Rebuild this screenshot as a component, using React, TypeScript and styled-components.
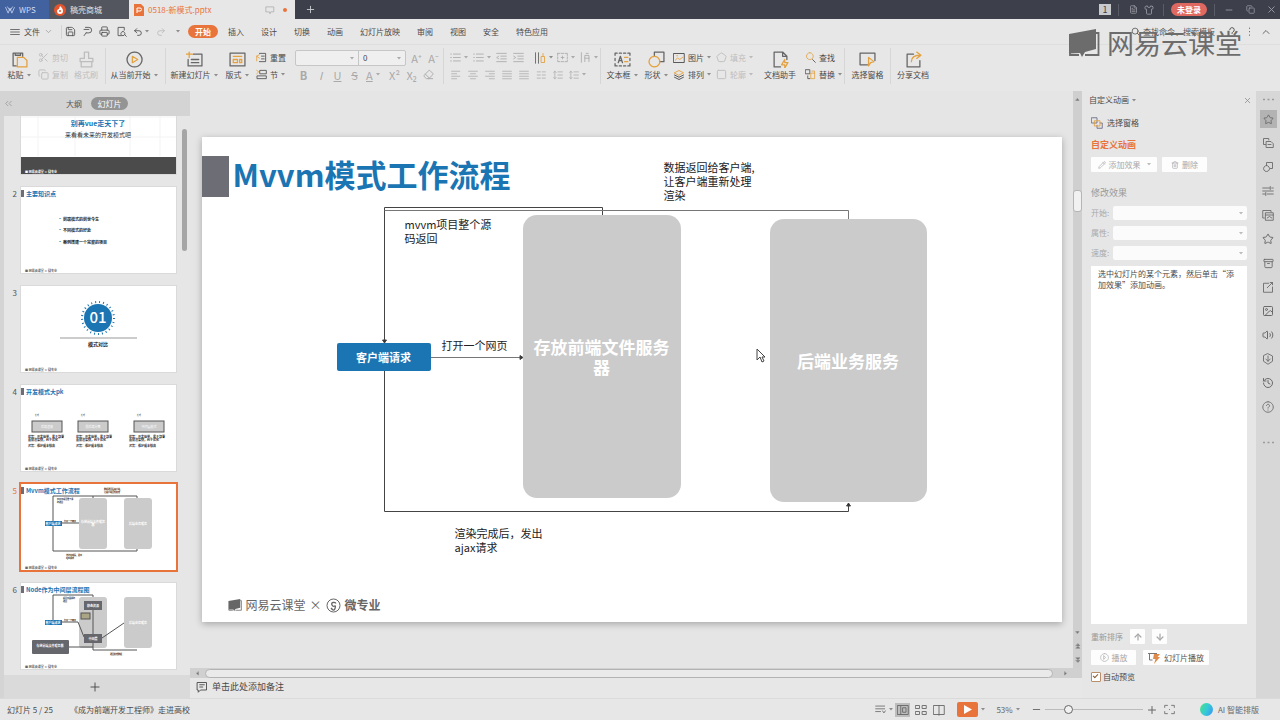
import React, { useLayoutEffect, useRef, useState } from "react";
import styled, { createGlobalStyle } from "styled-components";
import {
  Scissors, Copy, Undo2, Redo2, Search, X, Minus, Plus, Star, Image, Volume2, History,
  Archive, Save, Printer, ChevronUp, ChevronDown, Shirt, FileText, Pencil, Trash2,
  ArrowUp, ArrowDown, Eraser, Pentagon, Square,
} from "lucide-react";

const c = {
  dark: "#3d3f4b",
  chrome: "#e8e7e7",
  panel: "#e6e6e6",
  trough: "#d4d4d4",
  line: "#d6d6d6",
  text: "#4a4a4a",
  icon: "#666",
  muted: "#a9a9a9",
  orange: "#e8743b",
  blue: "#1b75b3",
  node: "#cbcbcb",
};

const Global = createGlobalStyle`
  *, *::before, *::after { box-sizing: border-box; }
  body { margin: 0; background: ${c.chrome}; }
  body, button, input, select {
    font-family: "Noto Sans CJK SC", "Noto Sans", sans-serif;
    font-size: 8px;
    line-height: 12px;
    color: ${c.text};
  }
  button { border: 0; padding: 0; background: none; white-space: nowrap; cursor: pointer; }
  svg { display: block; flex: none; }
`;

const Window = styled.div`
  position: relative;
  display: flex;
  flex-direction: column;
  height: 100vh;
  min-height: 480px;
  overflow: hidden;
  background: ${c.chrome};
`;

/* ---------- icons ---------- */

type GlyphProps = { d: string; accent?: string; size?: number; color?: string; fill?: string };

const Glyph = ({ d, accent, size = 12, color = "currentColor", fill = "none" }: GlyphProps) => (
  <svg width={size} height={size} viewBox="0 0 16 16" fill={fill} stroke={color} strokeWidth={1.2} strokeLinejoin="round" strokeLinecap="round" aria-hidden="true">
    <path d={d} />
    {accent && <path d={accent} fill="none" stroke="#e3a13f" />}
  </svg>
);

const Caret = ({ color = "#8c8c8c" }: { color?: string }) => (
  <svg width="4" height="3" viewBox="0 0 4 3" aria-hidden="true"><path d="M0 0h4L2 2.6z" fill={color} /></svg>
);

const BookLogo = ({ size = 32, color = "#6c6c6c" }: { size?: number; color?: string }) => (
  <svg width={size} height={size} viewBox="0 0 32 32" aria-hidden="true">
    <path d="M1 7 28 2v20L17 25l-3 5-2-4-11 .5z" fill={color} />
    <path d="M28 6h2.500v22H17M2 26v2h9" fill="none" stroke={color} strokeWidth="1.800" />
  </svg>
);

const g = {
  menu: "M1 4h14M1 8h14M1 12h14",
  preview: "M12 6V2H3v12h5M10 8a3 3 0 1 0 .1 0M12.500 12.500 15 15",
  bullets: "M1 3h1M5 3h10M1 8h1M5 8h10M1 13h1M5 13h10",
  left: "M1 2h13M1 6h8M1 10h13M1 14h8",
  center: "M1 2h14M4 6h8M1 10h14M4 14h8",
  right: "M1 2h14M7 6h8M1 10h14M7 14h8",
  justify: "M1 2h14M1 6h14M1 10h14M1 14h14",
  indent: "M1 2h14M7 6h8M7 10h8M1 14h14M4 6 1 8l3 2",
  outdent: "M1 2h14M7 6h8M7 10h8M1 14h14M1 6l3 2-3 2",
  spacing: "M3 2v12M1 4l2-2 2 2M1 12l2 2 2-2M8 3h7M8 8h7M8 13h7",
  columns: "M2 3h5M2 8h5M2 13h5M10 3h5M10 8h5M10 13h5",
  dir: "M2 1v14M6 1v14",
  frame: "M1 2h3M6 2h4M12 2h3v3M15 7v3M15 12v2h-3M10 14H6M4 14H1v-2M1 10V7M1 5V2M6 8h4M8 6v4",
  textDir: "M2 1v14M7 14V5h6v9M7 9h6M9 2h3",
  chevrons: "M7 4 3 8l4 4M13 4 9 8l4 4",
};

/* ---------- title bar ---------- */

const TitleBar = styled.header`
  display: flex;
  align-items: center;
  flex: none;
  height: 19px;
  background: ${c.dark};
  color: #d8d8dc;
`;

const WindowTab = styled.button<{ $w: number; $bg: string; $fg: string }>`
  display: flex;
  align-items: center;
  gap: 4px;
  align-self: stretch;
  width: ${(p) => p.$w}px;
  padding: 0 8px 0 5px;
  background: ${(p) => p.$bg};
  color: ${(p) => p.$fg};
`;

const Push = styled.span<{ $fixed?: boolean }>`
  flex: ${(p) => (p.$fixed ? "none" : 1)};
`;

const Dot = styled.span`
  width: 4px;
  height: 4px;
  border-radius: 50%;
  background: ${c.orange};
`;

const NewTab = styled.button`
  display: grid;
  place-items: center;
  width: 31px;
  color: #c9cad0;
`;

const TitleTools = styled.div`
  display: flex;
  align-items: center;
  gap: 7px;
  margin-left: auto;
  padding-right: 2px;
`;

const TitleButton = styled.button<{ $w?: number }>`
  display: grid;
  place-items: center;
  width: ${(p) => p.$w ?? 14}px;
  height: 14px;
  color: #9c9da6;
`;

const TitlePair = styled.div`
  display: flex;
  gap: 2px;
`;

const CountBadge = styled.span`
  width: 12px;
  height: 11px;
  background: #c9cacd;
  color: ${c.dark};
  font-size: 9px;
  line-height: 11px;
  text-align: center;
`;

const Login = styled.button`
  width: 36px;
  height: 13px;
  border-radius: 7px;
  background: #df6860;
  color: #fff;
  font-weight: 700;
`;

const Rule = styled.span`
  width: 1px;
  height: 12px;
  background: #5a5c67;
`;

/* ---------- menu row ---------- */

const MenuRow = styled.div`
  display: flex;
  align-items: center;
  flex: none;
  height: 25px;
  padding: 0 9px 0 10px;
`;

const FileButton = styled.button`
  display: flex;
  align-items: center;
  gap: 4px;
  width: 42px;
`;

const QuickBar = styled.div`
  display: flex;
  align-items: center;
  gap: 1px;
  width: 127px;
  margin-left: 9px;
  border-left: 1px solid #d3d3d3;
`;

const QuickButton = styled.button<{ $w?: number }>`
  display: flex;
  align-items: center;
  justify-content: center;
  gap: 2px;
  width: ${(p) => p.$w ?? 16}px;
  height: 14px;
`;

const Tabs = styled.nav`
  display: flex;
  align-items: center;
  gap: 17px;
`;

const TabButton = styled.button<{ $active?: boolean }>`
  ${(p) => p.$active && `
    width: 30px;
    height: 13px;
    margin-right: -7px;
    border-radius: 7px;
    background: ${c.orange};
    color: #fff;
    font-weight: 700;
  `}
`;

const MenuRight = styled.div`
  display: flex;
  align-items: center;
  gap: 7px;
  margin-left: auto;
`;

const CommandSearch = styled.label`
  display: flex;
  align-items: center;
  gap: 3px;
  margin-right: 1px;
  input {
    width: 76px;
    padding: 0;
    border: 0;
    background: none;
  }
  input::placeholder { color: #555; opacity: 1; }
`;

const Watermark = styled.div`
  position: absolute;
  top: 23px;
  right: 38px;
  display: flex;
  align-items: center;
  gap: 7px;
  color: #6c6c6c;
  font-size: 27px;
  font-weight: 400;
  line-height: 40px;
  pointer-events: none;
`;

/* ---------- ribbon ---------- */

const Ribbon = styled.div`
  display: flex;
  flex: none;
  height: 47px;
  padding: 3px 0 7px;
  border-top: 1px solid #dfdede;
`;

const Group = styled.div<{ $l?: number; $r?: number; $open?: boolean }>`
  display: flex;
  align-items: stretch;
  padding-left: ${(p) => p.$l ?? 0}px;
  padding-right: ${(p) => p.$r ?? 0}px;
  border-right: 1px solid ${(p) => (p.$open ? "transparent" : "#d6d6d6")};
`;

const BigButton = styled.button<{ $w: number; $off?: boolean }>`
  display: flex;
  flex-direction: column;
  align-items: center;
  justify-content: center;
  gap: 1px;
  width: ${(p) => p.$w}px;
  color: ${(p) => (p.$off ? "#bdbdbd" : c.icon)};
`;

const Label = styled.span<{ $off?: boolean }>`
  display: flex;
  align-items: center;
  gap: 3px;
  color: ${(p) => (p.$off ? "#bdbdbd" : c.text)};
`;

const Stack = styled.div<{ $w: number }>`
  display: flex;
  flex-direction: column;
  justify-content: center;
  gap: 5px;
  width: ${(p) => p.$w}px;
  padding-left: 4px;
`;

const SmallButton = styled.button<{ $off?: boolean }>`
  display: flex;
  align-items: center;
  gap: 3px;
  color: ${(p) => (p.$off ? "#bdbdbd" : c.text)};
`;

const ToolRows = styled.div`
  display: flex;
  flex-direction: column;
  justify-content: center;
`;

const ToolRow = styled.div`
  display: flex;
  align-items: center;
  height: 17px;
`;

const Tool = styled.button<{ $menu?: boolean; $gap?: boolean }>`
  display: flex;
  align-items: center;
  justify-content: ${(p) => (p.$menu ? "flex-start" : "center")};
  gap: 3px;
  width: ${(p) => (p.$menu ? 23 : 17)}px;
  margin-left: ${(p) => (p.$gap ? 4 : 0)}px;
  padding-left: ${(p) => (p.$menu ? 3 : 0)}px;
  color: ${c.muted};
  font-size: 11px;
`;

const FontBoxes = styled.div`
  display: flex;
  width: 111px;
  height: 16px;
  margin-right: 2px;
  border: 1px solid #c6c6c6;
  border-radius: 2px;
  background: #efefef;
`;

const ComboWrap = styled.label<{ $w?: number }>`
  position: relative;
  display: block;
  flex: ${(p) => (p.$w ? "none" : 1)};
  width: ${(p) => (p.$w ? p.$w + "px" : "auto")};
  & + & { border-left: 1px solid #c6c6c6; }
  select {
    appearance: none;
    width: 100%;
    height: 14px;
    padding: 0 4px;
    border: 0;
    border-radius: 2px;
    background: transparent;
  }
  svg { position: absolute; right: 4px; top: 6px; pointer-events: none; }
`;

/* ---------- body ---------- */

const Body = styled.main`
  display: flex;
  flex: 1;
  min-height: 0;
`;

const SlidePanel = styled.aside`
  display: flex;
  flex-direction: column;
  flex: none;
  width: 190px;
  padding-left: 4px;
  background: ${c.trough};
`;

const PanelTabs = styled.div`
  display: flex;
  align-items: center;
  flex: none;
  height: 25px;
`;

const PanelTab = styled.button<{ $active?: boolean }>`
  width: ${(p) => (p.$active ? 37 : 34)}px;
  height: 13px;
  border-radius: 7px;
  background: ${(p) => (p.$active ? "#949494" : "none")};
  color: ${(p) => (p.$active ? "#fff" : "#555")};
`;

const Collapse = styled.button`
  width: 53px;
  color: #8d8d8d;
`;

const ThumbArea = styled.div`
  display: flex;
  flex: 1;
  min-height: 0;
  background: ${c.panel};
`;

const ThumbList = styled.ol`
  display: flex;
  flex: 1;
  flex-direction: column;
  gap: 11px;
  margin: 0;
  padding: 0 0 5px;
  overflow: hidden;
  list-style: none;
`;

const ThumbItem = styled.li<{ $active?: boolean }>`
  display: flex;
  flex: none;
  height: 88px;
  color: ${(p) => (p.$active ? c.orange : "#555")};
`;

const ThumbNumber = styled.span`
  width: 16px;
  padding: 2px 3px 0 0;
  text-align: right;
`;

const ThumbButton = styled.button<{ $active?: boolean }>`
  width: 157px;
  height: 88px;
  background: #fff;
  outline: ${(p) => (p.$active ? `2px solid ${c.orange}` : "1px solid #dadada")};
  outline-offset: -1px;
  svg { width: 100%; height: 100%; }
`;

const ThumbScroll = styled.div`
  width: 9px;
  padding: 13px 3px 0 1px;
  &::before {
    content: "";
    display: block;
    height: 122px;
    border-radius: 3px;
    background: #a6a6a6;
  }
`;

const AddSlide = styled.button`
  display: grid;
  place-items: center;
  flex: none;
  height: 23px;
  padding-right: 4px;
  background: #dadada;
`;

const Center = styled.section`
  display: flex;
  flex: 1;
  flex-direction: column;
  min-width: 0;
`;

const StageRow = styled.div`
  display: flex;
  flex: 1;
  min-height: 0;
`;

const Stage = styled.div`
  display: grid;
  place-items: center;
  flex: 1;
  min-width: 0;
  overflow: hidden;
  background: #e5e5e5;
`;

const VScroll = styled.div`
  display: flex;
  flex-direction: column;
  align-items: center;
  gap: 8px;
  flex: none;
  width: 9px;
  padding: 6px 0 5px;
  background: #cfcfcf;
`;

const VThumb = styled.span`
  width: 9px;
  height: 22px;
  margin: 80px 0 auto;
  border: 1px solid #b5b5b5;
  border-radius: 3px;
  background: #f1f1f1;
`;

const HScroll = styled.div`
  display: flex;
  align-items: center;
  justify-content: space-between;
  flex: none;
  height: 10px;
  padding: 0 14px 0 5px;
  background: #d0d0d0;
`;

const HThumb = styled.span`
  flex: 1;
  height: 9px;
  margin: 0 10px 0 5px;
  border: 1px solid #b3b3b3;
  border-radius: 5px;
  background: #eaeaea;
`;

const NotesRow = styled.div`
  display: flex;
  align-items: center;
  gap: 4px;
  flex: none;
  height: 20px;
  padding: 0 0 2px 6px;
  font-size: 9px;
`;

/* ---------- slide canvas ---------- */

const Slide = styled.article`
  position: relative;
  width: 860px;
  height: 485px;
  background: #fff;
  box-shadow: 0 2px 7px rgba(0, 0, 0, 0.28);
  color: #222;
`;

const SlideHeading = styled.h1`
  position: absolute;
  left: 0;
  top: 19px;
  display: flex;
  align-items: flex-start;
  gap: 4px;
  height: 41px;
  margin: 0;
  color: ${c.blue};
  font-size: 31px;
  line-height: 36px;
  font-weight: 700;
  white-space: nowrap;
  &::before {
    content: "";
    width: 27px;
    height: 41px;
    background: #6d6e75;
  }
`;

const Connectors = styled.svg`
  position: absolute;
  inset: 0;
`;

const Node = styled.div<{ $x: number; $y: number; $w: number; $h: number; $small?: boolean }>`
  position: absolute;
  left: ${(p) => p.$x}px;
  top: ${(p) => p.$y}px;
  display: grid;
  place-items: center;
  width: ${(p) => p.$w}px;
  height: ${(p) => p.$h}px;
  padding: 0 10px;
  border-radius: ${(p) => (p.$small ? 2 : 14)}px;
  background: ${(p) => (p.$small ? c.blue : c.node)};
  color: #fff;
  font-size: ${(p) => (p.$small ? 11 : 17)}px;
  line-height: 20px;
  font-weight: 700;
  text-align: center;
`;

const Note = styled.p<{ $x: number; $y: number; $w: number }>`
  position: absolute;
  left: ${(p) => p.$x}px;
  top: ${(p) => p.$y}px;
  width: ${(p) => p.$w}px;
  margin: 0;
  font-size: 11px;
  line-height: 14px;
`;

const SlideFooter = styled.footer`
  position: absolute;
  left: 26px;
  top: 460px;
  display: flex;
  align-items: center;
  gap: 4px;
  height: 16px;
  color: #666;
  font-size: 12px;
  line-height: 16px;
  b { font-size: 12px; }
`;

const Pointer = styled.svg`
  position: absolute;
  left: 554px;
  top: 211px;
`;

/* ---------- animation pane ---------- */

const Pane = styled.aside`
  display: flex;
  flex-direction: column;
  flex: none;
  width: 174px;
  padding: 2px 9px 15px;
  background: ${c.panel};
`;

const PaneTitle = styled.div`
  display: flex;
  align-items: center;
  justify-content: space-between;
  height: 14px;
  margin-left: -2px;
  margin-right: -5px;
`;

const PaneLink = styled.button`
  display: flex;
  align-items: center;
  gap: 4px;
  height: 14px;
  margin: 9px 0 8px;
`;

const PaneHeading = styled.h2<{ $accent?: boolean }>`
  margin: 0;
  color: ${(p) => (p.$accent ? c.orange : "#999")};
  font-size: 9px;
  line-height: 14px;
  font-weight: ${(p) => (p.$accent ? 700 : 400)};
`;

const PaneLabel = styled.span`
  color: #999;
`;

const PaneRow = styled.div<{ $top: number; $gap: number }>`
  display: flex;
  align-items: center;
  gap: ${(p) => p.$gap}px;
  margin-top: ${(p) => p.$top}px;
`;

const PaneButton = styled.button<{ $w: number; $strong?: boolean }>`
  display: flex;
  align-items: center;
  justify-content: center;
  gap: 3px;
  width: ${(p) => p.$w}px;
  height: 15px;
  border-radius: 1px;
  background: #fdfdfd;
  color: ${(p) => (p.$strong ? "#555" : c.muted)};
`;

const Field = styled.label`
  display: flex;
  align-items: center;
  justify-content: space-between;
  height: 14px;
  margin-top: 6px;
  color: ${c.muted};
`;

const FieldBox = styled.span`
  position: relative;
  width: 134px;
  select {
    display: block;
    appearance: none;
    width: 100%;
    height: 14px;
    border: 0;
    border-radius: 2px;
    background: #fbfbfb;
    opacity: 1;
  }
  svg { position: absolute; right: 4px; top: 6px; }
`;

const EffectList = styled.div`
  flex: 1;
  min-height: 0;
  margin-top: 6px;
  padding: 2px 7px;
  background: #fff;
  line-height: 11px;
`;

const Check = styled.label`
  display: flex;
  align-items: center;
  gap: 2px;
  height: 12px;
  margin-top: 6px;
  input {
    appearance: none;
    width: 10px;
    height: 10px;
    margin: 0;
    border: 1px solid #b98f6b;
    border-radius: 1px;
    background: #fff;
  }
  input:checked::after {
    content: "";
    display: block;
    width: 5px;
    height: 3px;
    margin: 1px;
    border: solid #8a5a35;
    border-width: 0 0 1px 1px;
    transform: rotate(-45deg);
  }
`;

const Rail = styled.aside`
  display: flex;
  flex-direction: column;
  align-items: center;
  flex: none;
  width: 24px;
  background: #d7d7d7;
`;

const RailButton = styled.button<{ $active?: boolean }>`
  display: grid;
  place-items: center;
  width: 17px;
  height: 18px;
  margin: 3px 0;
  background: ${(p) => (p.$active ? "#b3b3b3" : "none")};
  color: #6b6b6b;
`;

const RailMore = styled.button<{ $h: number }>`
  height: ${(p) => p.$h}px;
  color: #9b9b9b;
`;

/* ---------- status bar ---------- */

const StatusBar = styled.footer`
  display: flex;
  align-items: center;
  flex: none;
  height: 22px;
  padding: 0 21px 0 7px;
  border-top: 1px solid #dadada;
`;

const StatusText = styled.span<{ $w?: number }>`
  width: ${(p) => (p.$w ? p.$w + "px" : "auto")};
  white-space: nowrap;
`;

const StatusTools = styled.div`
  display: flex;
  align-items: center;
  gap: 3px;
  margin-left: auto;
`;

const ViewButton = styled.button<{ $active?: boolean; $w?: number }>`
  display: flex;
  align-items: center;
  justify-content: center;
  gap: 3px;
  width: ${(p) => p.$w ?? 15}px;
  height: 14px;
  background: ${(p) => (p.$active ? "#bdbdbd" : "none")};
  color: #666;
`;

const PlayButton = styled.button`
  display: grid;
  place-items: center;
  width: 21px;
  height: 15px;
  margin-left: 8px;
  border-radius: 2px;
  background: ${c.orange};
`;

const Zoom = styled.input`
  appearance: none;
  width: 98px;
  height: 12px;
  margin: 0;
  background: linear-gradient(#bcbcbc, #bcbcbc) center / 100% 1px no-repeat;
  &::-webkit-slider-thumb {
    appearance: none;
    width: 9px;
    height: 9px;
    border: 1px solid #666;
    border-radius: 50%;
    background: #f2f2f2;
  }
`;

const Assistant = styled.button`
  display: flex;
  align-items: center;
  gap: 5px;
  margin-left: 20px;
  color: #666;
  &::before {
    content: "";
    width: 13px;
    height: 13px;
    border-radius: 50%;
    background: linear-gradient(115deg, #47dd91 10%, #35cbd6 50%, #3a9df0 90%);
  }
`;

/* ---------- thumbnails ---------- */

const ThumbTitle = ({ children }: { children: string }) => (
  <>
    <rect y="4" width="4" height="7" fill="#6d6e75" />
    <text x="6" y="10" fontSize="6" fontWeight="700" fill={c.blue}>{children}</text>
  </>
);

const ThumbFooter = ({ fill = "#666" }: { fill?: string }) => (
  <text x="5" y="86" fontSize="3" fontWeight="700" fill={fill}>■ 网易云课堂 × 微专业</text>
);

const ThumbSvg = ({ children }: { children: React.ReactNode }) => (
  <svg viewBox="0 0 157 88">{children}</svg>
);

const ThumbOne = () => (
  <ThumbSvg>
    <path d="M0 30h157M0 50h157M18 0v69M55 0v69M110 0v69M140 0v69" stroke="#f3f3f3" />
    <text x="78" y="39" fontSize="7" fontWeight="700" fill={c.blue} textAnchor="middle">别再vue走天下了</text>
    <text x="78" y="50" fontSize="6" fill="#333" textAnchor="middle">来看看未来的开发模式吧</text>
    <rect y="70" width="157" height="18" fill="#4b4b4b" />
    <ThumbFooter fill="#fff" />
  </ThumbSvg>
);

const ThumbTwo = () => (
  <ThumbSvg>
    <ThumbTitle>主要知识点</ThumbTitle>
    <g fontSize="4" fontWeight="700" fill="#222">
      <text x="38" y="35">• 前端模式的前世今生</text>
      <text x="38" y="46">• 不同模式的好处</text>
      <text x="38" y="58">• 案例搭建一个完整的项目</text>
    </g>
    <ThumbFooter />
  </ThumbSvg>
);

const ThumbThree = () => (
  <ThumbSvg>
    <circle cx="78" cy="33" r="16" fill="none" stroke={c.blue} strokeWidth="2" strokeDasharray="1 3" />
    <circle cx="78" cy="33" r="14" fill={c.blue} />
    <text x="78" y="38" fontSize="15" fontWeight="500" fill="#fff" textAnchor="middle">01</text>
    <path d="M40 53h77" stroke="#999" />
    <text x="78" y="61" fontSize="5" fontWeight="700" fill="#222" textAnchor="middle">模式对比</text>
    <ThumbFooter />
  </ThumbSvg>
);

const compareColumns = [
  { x: 8, box: 12, name: "后端渲染" },
  { x: 56, box: 58, name: "前后端分离" },
  { x: 109, box: 114, name: "中间层模式" },
];

const ThumbFour = () => (
  <ThumbSvg>
    <ThumbTitle>开发模式大pk</ThumbTitle>
    {compareColumns.map((col) => (
      <g key={col.name}>
        <text x={col.box + 3} y="32" fontSize="2" fill="#222">模式</text>
        <rect x={col.box} y="37" width="30" height="11" fill={c.node} stroke="#555" />
        <text x={col.box + 15} y="44" fontSize="3" fill="#fff" textAnchor="middle">{col.name}</text>
        <g fontSize="3" fontWeight="700" fill="#222">
          <text x={col.x} y="54">优势：开发简单，易于部署</text>
          <text x={col.x} y="57">首屏渲染快，利于优化</text>
          <text x={col.x} y="63">劣势：维护成本较高</text>
        </g>
      </g>
    ))}
    <ThumbFooter />
  </ThumbSvg>
);

const ThumbFive = () => (
  <ThumbSvg>
    <ThumbTitle>Mvvm模式工作流程</ThumbTitle>
    <g fill={c.node}>
      <rect x="59" y="15" width="28" height="51" rx="3" />
      <rect x="104" y="15" width="28" height="51" rx="3" />
    </g>
    <path d="M73 15v-2H33v55h84v-2M117 15v-2H73M42 40h17" fill="none" stroke="#555" />
    <rect x="25" y="38" width="17" height="5" fill={c.blue} />
    <g fontSize="3" fontWeight="700" fill="#fff" textAnchor="middle">
      <text x="33" y="42">客户端请求</text>
      <text x="73" y="40">存放前端文件服务</text>
      <text x="73" y="43">器</text>
      <text x="118" y="42">后端业务服务</text>
    </g>
    <g fontSize="2" fontWeight="700" fill="#222">
      <text x="37" y="17">mvvm项目整个源</text>
      <text x="37" y="20">码返回</text>
      <text x="84" y="7">数据返回给客户端,</text>
      <text x="84" y="10">让客户端重新处理</text>
      <text x="44" y="39">打开一个网页</text>
      <text x="46" y="73">渲染完成后，发出</text>
      <text x="46" y="76">ajax请求</text>
    </g>
    <ThumbFooter />
  </ThumbSvg>
);

const ThumbSix = () => (
  <ThumbSvg>
    <ThumbTitle>Node作为中间层流程图</ThumbTitle>
    <g fill={c.node}>
      <rect x="59" y="15" width="28" height="51" rx="3" />
      <rect x="104" y="15" width="28" height="51" rx="3" />
    </g>
    <path d="M73 15v-2H33v25M42 40h16l6 15M73 28v24M82 56l22-15M49 65h24v-5M73 65v3h44" fill="none" stroke="#555" />
    <g fill="#66676c">
      <rect x="64" y="19" width="18" height="9" />
      <rect x="64" y="52" width="18" height="9" />
      <rect x="12" y="58" width="37" height="14" rx="1" />
    </g>
    <rect x="61" y="31" width="9" height="6" fill="#aaa585" stroke="#555" />
    <rect x="25" y="38" width="17" height="5" fill={c.blue} />
    <g fontSize="3" fontWeight="700" fill="#fff" textAnchor="middle">
      <text x="33" y="42">客户端请求</text>
      <text x="73" y="25">静态资源</text>
      <text x="73" y="58">中间层</text>
      <text x="30" y="65">存放前端文件服务器</text>
      <text x="118" y="42">后端业务服务</text>
    </g>
    <g fontSize="2" fontWeight="700" fill="#222">
      <text x="43" y="17">项目页面源码</text>
      <text x="43" y="20">返回</text>
      <text x="44" y="39">打开一个网页</text>
      <text x="90" y="73">返回处理数据</text>
    </g>
    <ThumbFooter />
  </ThumbSvg>
);

const thumbs = [ThumbOne, ThumbTwo, ThumbThree, ThumbFour, ThumbFive, ThumbSix];

/* ---------- assembled parts ---------- */

const menuTabs = ["开始", "插入", "设计", "切换", "动画", "幻灯片放映", "审阅", "视图", "安全", "特色应用"];

function Header() {
  return (
    <>
      <TitleBar>
        <WindowTab $w={49} $bg="#42619f" $fg="#cfdcf5">
          <Glyph d="M1 4l4 9 3-8 3 8 4-9M4 3l4 6 4-6" size={10} />WPS
        </WindowTab>
        <WindowTab $w={80} $bg="#54565f" $fg="#e3e3e3">
          <svg width="12" height="12" viewBox="0 0 12 12"><circle cx="6" cy="6" r="6" fill="#e5552d" /><path d="M6 2c2 2 3 3 3 5a3 3 0 0 1-6 0c0-1 1-2 2-2z" fill="#fff" /><circle cx="6" cy="7" r="1" fill="#e5552d" /></svg>
          稿壳商城
        </WindowTab>
        <WindowTab $w={166} $bg={c.chrome} $fg={c.orange}>
          <svg width="10" height="12" viewBox="0 0 10 12"><path d="M0 0h7l3 3v9H0z" fill={c.orange} /><path d="M3 9V4h3a1 1 0 0 1 0 3H3" fill="none" stroke="#fff" /></svg>
          0518-新模式.pptx
          <Push />
          <Glyph d="M2 3h12v8H9l-1 3-1-3H2z" size={10} color="#aaa" />
          <Push $fixed />
          <Dot />
        </WindowTab>
        <NewTab aria-label="新建标签"><Plus size={11} /></NewTab>
        <TitleTools>
          <CountBadge>1</CountBadge>
          <Rule />
          <TitlePair>
            <TitleButton aria-label="文档"><FileText size={9} /></TitleButton>
            <TitleButton aria-label="皮肤"><Shirt size={10} /></TitleButton>
          </TitlePair>
          <Rule />
          <Login>未登录</Login>
          <Rule />
          <TitleButton aria-label="最小化"><Minus size={10} /></TitleButton>
          <TitleButton aria-label="还原"><Copy size={9} /></TitleButton>
          <TitleButton aria-label="关闭"><X size={11} /></TitleButton>
        </TitleTools>
      </TitleBar>
      <MenuRow>
        <FileButton><Glyph d={g.menu} size={10} />文件<ChevronDown size={9} color="#999" /></FileButton>
        <QuickBar>
          <QuickButton aria-label="保存"><Save size={11} strokeWidth={1.8} /></QuickButton>
          <QuickButton aria-label="输出"><Glyph d="M5 2h5a4 4 0 0 1 0 8H6M6 10l-3 4M3 5h7" size={11} /></QuickButton>
          <QuickButton aria-label="打印"><Printer size={11} strokeWidth={1.8} /></QuickButton>
          <QuickButton aria-label="打印预览"><Glyph d={g.preview} size={11} /></QuickButton>
          <QuickButton aria-label="撤销" $w={22}><Undo2 size={10} /><Caret /></QuickButton>
          <QuickButton aria-label="恢复"><Redo2 size={10} color="#bbb" /></QuickButton>
          <QuickButton aria-label="自定义"><Caret /></QuickButton>
        </QuickBar>
        <Tabs>
          {menuTabs.map((t, i) => <TabButton key={t} $active={i === 0}>{t}</TabButton>)}
        </Tabs>
        <MenuRight>
          <CommandSearch><Search size={9} /><input aria-label="查找命令" placeholder="查找命令、搜索模板" /></CommandSearch>
          <QuickButton $w={10} aria-label="帮助"><Glyph d="M5 5a3 3 0 1 1 4 3q-1 .500-1 2M8 13v.200" size={12} /></QuickButton>
          <QuickButton $w={10} aria-label="更多"><Glyph d="M8 3v.500M8 8v.500M8 13v.500" size={11} /></QuickButton>
          <QuickButton $w={10} aria-label="收起"><ChevronUp size={12} strokeWidth={1.6} /></QuickButton>
        </MenuRight>
      </MenuRow>
    </>
  );
}

function RibbonBar() {
  return (
    <Ribbon>
      <Group $l={4} $r={3}>
        <BigButton $w={30}>
          <Glyph size={17} d="M5 14H2V2h9v3M4 2v2h5V2" accent="M6 6h6l3 3v6H6z" />
          <Label>粘贴<Caret /></Label>
        </BigButton>
        <Stack $w={36}>
          <SmallButton $off><Scissors size={11} />剪切</SmallButton>
          <SmallButton $off><Copy size={11} />复制</SmallButton>
        </Stack>
        <BigButton $w={32} $off><Glyph size={17} d="M6 1h4v6h4v3H2V7h4zM3 10v5h10v-5" /><Label $off>格式刷</Label></BigButton>
      </Group>
      <Group $r={3}>
        <BigButton $w={56}>
          <Glyph size={17} d="M8 1a7 7 0 1 0 .1 0" accent="M6 5l5 3-5 3z" />
          <Label>从当前开始<Caret /></Label>
        </BigButton>
      </Group>
      <Group $r={3} $open>
        <BigButton $w={56}>
          <Glyph size={17} d="M7 3h8v11H2V8M5 8h7M5 11h7" accent="M3 1v5M0 3h6" />
          <Label>新建幻灯片<Caret /></Label>
        </BigButton>
        <BigButton $w={30}>
          <Glyph size={17} d="M1 2h14v12H1z" accent="M4 5h8M4 8h4v3H4zM10 8h2v3h-2z" />
          <Label>版式<Caret /></Label>
        </BigButton>
        <Stack $w={36}>
          <SmallButton><Glyph size={11} d="M5 2h9v12H5M8 6h4M8 10h4" accent="M5 4L1 6l4 3M1 6v7" />重置</SmallButton>
          <SmallButton><Glyph size={11} d="M6 2h9v5H6zM2 10h13v4H2z" accent="M1 2l3 2-3 3" />节<Caret /></SmallButton>
        </Stack>
      </Group>
      <Group $l={3} $r={1}>
        <ToolRows>
          <ToolRow>
            <FontBoxes>
              <ComboWrap><select aria-label="字体"><option> </option></select><Caret color="#aaa" /></ComboWrap>
              <ComboWrap $w={47}><select aria-label="字号"><option>0</option></select><Caret color="#aaa" /></ComboWrap>
            </FontBoxes>
            <Tool aria-label="增大字号">A⁺</Tool>
            <Tool aria-label="减小字号">A⁻</Tool>
          </ToolRow>
          <ToolRow>
            <Tool aria-label="加粗"><b>B</b></Tool>
            <Tool aria-label="倾斜"><i>I</i></Tool>
            <Tool aria-label="下划线"><u>U</u></Tool>
            <Tool aria-label="删除线"><s>S</s></Tool>
            <Tool aria-label="字体颜色" $menu><u>A</u><Caret color="#aaa" /></Tool>
            <Tool aria-label="上标">X²</Tool>
            <Tool aria-label="下标">X₂</Tool>
            <Tool aria-label="清除格式"><Eraser size={11} /></Tool>
          </ToolRow>
        </ToolRows>
      </Group>
      <Group $l={3}>
        <ToolRows>
          <ToolRow>
            <Tool aria-label="项目符号" $menu><Glyph d={g.bullets} size={11} /><Caret color="#aaa" /></Tool>
            <Tool aria-label="编号" $menu><Glyph d={g.bullets} size={11} /><Caret color="#aaa" /></Tool>
            <Tool aria-label="减少缩进"><Glyph d={g.indent} size={11} /></Tool>
            <Tool aria-label="增加缩进"><Glyph d={g.outdent} size={11} /></Tool>
            <Tool aria-label="文字方向" $menu $gap><Glyph d={g.dir} color="#666" accent="M10 6h4v8h-4zM12 2v3" size={12} /><Caret /></Tool>
            <Tool aria-label="对齐文本" $menu><Glyph d={g.frame} size={11} /><Caret color="#aaa" /></Tool>
            <Tool aria-label="竖排" $menu><Glyph d={g.textDir} size={11} /><Caret color="#aaa" /></Tool>
          </ToolRow>
          <ToolRow>
            <Tool aria-label="左对齐"><Glyph d={g.left} size={10} /></Tool>
            <Tool aria-label="居中"><Glyph d={g.center} size={10} /></Tool>
            <Tool aria-label="右对齐"><Glyph d={g.right} size={10} /></Tool>
            <Tool aria-label="两端对齐"><Glyph d={g.justify} size={10} /></Tool>
            <Tool aria-label="分散对齐"><Glyph d={g.justify} size={10} /></Tool>
            <Tool aria-label="分栏"><Glyph d={g.columns} size={10} /></Tool>
            <Tool aria-label="行距"><Glyph d={g.spacing} size={10} /></Tool>
            <Tool aria-label="段落" $menu><Glyph d={g.spacing} size={10} /><Caret color="#aaa" /></Tool>
          </ToolRow>
        </ToolRows>
      </Group>
      <Group $r={1} $open>
        <BigButton $w={42}>
          <Glyph size={17} d="M1 2h2M5 2h2M9 2h2M13 2h2v2M15 7v2M15 12v2h-2M11 14H9M7 14H5M3 14H1v-2M1 9V7M1 4V2M4 11l2-6 2 6M5 9h2" accent="M10 6h3M10 10h3" />
          <Label>文本框<Caret /></Label>
        </BigButton>
        <BigButton $w={26}>
          <Glyph size={17} d="M6 5V1h9v9h-4" accent="M6 5a5 5 0 1 0 .1 0" />
          <Label>形状<Caret /></Label>
        </BigButton>
        <Stack $w={43}>
          <SmallButton><Glyph size={12} d="M1 2h14v12H1z" accent="M3 11l3-3 3 2 4-3M5 5h1" />图片<Caret /></SmallButton>
          <SmallButton><Glyph size={12} d="M2 8l6 3 6-3M2 11l6 3 6-3" accent="M2 5l6-3 6 3-6 3z" />排列<Caret /></SmallButton>
        </Stack>
        <Stack $w={43}>
          <SmallButton $off><Pentagon size={11} />填充<Caret color="#bbb" /></SmallButton>
          <SmallButton $off><Square size={11} />轮廓<Caret color="#bbb" /></SmallButton>
        </Stack>
      </Group>
      <Group $l={2} $r={3}>
        <BigButton $w={42}>
          <Glyph size={17} d="M8 15H2V1h8l4 4v3M10 1v4h4" accent="M12 8l-3 5h3v3l3-5h-3z" />
          <Label>文档助手</Label>
        </BigButton>
        <Stack $w={40}>
          <SmallButton><Glyph size={11} d="M11 11l4 4" accent="M7 1a5 5 0 1 0 .1 0" />查找</SmallButton>
          <SmallButton><Glyph size={11} d="M1 1h6v6H1zM4 10v4h3" accent="M9 6h5v8H9zM10 3h4v3" />替换<Caret /></SmallButton>
        </Stack>
      </Group>
      <Group>
        <BigButton $w={45}><Glyph size={17} d="M8 13H1V2h14v7" accent="M9 6l5 4-3 1-2 3z" /><Label>选择窗格</Label></BigButton>
      </Group>
      <Group $open>
        <BigButton $w={44}><Glyph size={17} d="M8 3H2v12h12V9" accent="M6 10q0-6 8-6M11 1l4 3-4 3" /><Label>分享文档</Label></BigButton>
      </Group>
    </Ribbon>
  );
}

function Thumbnails() {
  const list = useRef<HTMLOListElement>(null);
  const [active, setActive] = useState(4);
  useLayoutEffect(() => {
    if (list.current) list.current.scrollTop = 29;
  }, []);
  return (
    <SlidePanel>
      <PanelTabs>
        <Collapse aria-label="收起面板"><Glyph d={g.chevrons} size={9} /></Collapse>
        <PanelTab>大纲</PanelTab>
        <PanelTab $active>幻灯片</PanelTab>
      </PanelTabs>
      <ThumbArea>
        <ThumbList ref={list}>
          {thumbs.map((Thumb, i) => (
            <ThumbItem key={i} $active={i === active}>
              <ThumbNumber>{i + 1}</ThumbNumber>
              <ThumbButton $active={i === active} onClick={() => setActive(i)} aria-label={`幻灯片 ${i + 1}`}><Thumb /></ThumbButton>
            </ThumbItem>
          ))}
        </ThumbList>
        <ThumbScroll />
      </ThumbArea>
      <AddSlide aria-label="新建幻灯片"><Plus size={14} strokeWidth={1.6} /></AddSlide>
    </SlidePanel>
  );
}

function Canvas() {
  return (
    <Slide>
      <SlideHeading>Mvvm模式工作流程</SlideHeading>
      <Connectors width="860" height="485" viewBox="0 0 860 485" fill="none" stroke="#444">
        <path d="M400.500 78V70.500H182.500V206" />
        <path d="M646.500 82V73.500H182.500" stroke="#777" />
        <path d="M229 220.500H320" stroke="#777" />
        <path d="M182.500 234V374.500H646.500V366" />
        <path d="M180.500 203h4l-2 3zM318 218.500v4l3-2zM644.500 369h4l-2-3z" fill="#333" />
      </Connectors>
      <Note $x={462} $y={23} $w={100}>数据返回给客户端,<br />让客户端重新处理<br />渲染</Note>
      <Note $x={203} $y={80} $w={92}>mvvm项目整个源<br />码返回</Note>
      <Note $x={240} $y={201} $w={72}>打开一个网页</Note>
      <Note $x={253} $y={389} $w={100}>渲染完成后，发出<br />ajax请求</Note>
      <Node $x={321} $y={78} $w={158} $h={283}>存放前端文件服务器</Node>
      <Node $x={568} $y={82} $w={157} $h={283}>后端业务服务</Node>
      <Node $x={135} $y={206} $w={94} $h={28} $small>客户端请求</Node>
      <SlideFooter>
        <BookLogo size={14} color="#666" />
        网易云课堂
        <span>×</span>
        <svg width="15" height="15" viewBox="0 0 15 15" fill="none" stroke="#666"><circle cx="7.500" cy="7.500" r="6.500" /><path d="M10 5.500Q9 4 7 4.500T6 7t2.500 1T9 10.500 5 10" strokeWidth="1.300" /></svg>
        <b>微专业</b>
      </SlideFooter>
      <Pointer width="10" height="16" viewBox="0 0 10 16"><path d="M1 1v11l3-3 2 5 2-1-2-4h3z" fill="#fff" stroke="#444" /></Pointer>
    </Slide>
  );
}

const fields = ["开始:", "属性:", "速度:"];

function AnimationPane() {
  return (
    <Pane>
      <PaneTitle>
        <Label>自定义动画<Caret /></Label>
        <button aria-label="关闭窗格"><X size={9} color="#888" /></button>
      </PaneTitle>
      <PaneLink><Glyph size={12} d="M1 1h7v7H1zM8 11v4h7V8h-3" color="#6d6d8c" accent="M5 5h7v7H5z" />选择窗格</PaneLink>
      <PaneHeading $accent>自定义动画</PaneHeading>
      <PaneRow $top={5} $gap={5}>
        <PaneButton $w={66}><Pencil size={8} />添加效果<Push $fixed /><Caret color="#bbb" /></PaneButton>
        <PaneButton $w={45}><Trash2 size={8} />删除</PaneButton>
      </PaneRow>
      <PaneRow $top={14} $gap={0}><PaneHeading>修改效果</PaneHeading></PaneRow>
      <div>
        {fields.map((f) => (
          <Field key={f}>
            {f}
            <FieldBox><select><option> </option></select><Caret color="#bbb" /></FieldBox>
          </Field>
        ))}
      </div>
      <EffectList>选中幻灯片的某个元素，然后单击“添加效果”添加动画。</EffectList>
      <PaneRow $top={5} $gap={7}>
        <PaneLabel>重新排序</PaneLabel>
        <PaneButton $w={15} aria-label="上移"><ArrowUp size={10} strokeWidth={3} /></PaneButton>
        <PaneButton $w={15} aria-label="下移"><ArrowDown size={10} strokeWidth={3} /></PaneButton>
      </PaneRow>
      <PaneRow $top={6} $gap={7}>
        <PaneButton $w={45}><Glyph size={9} d="M8 1a7 7 0 1 0 .1 0M7 5l3 3-3 3z" />播放</PaneButton>
        <PaneButton $w={66} $strong>
          <svg width="13" height="12" viewBox="0 0 13 12"><path d="M0 1.500h9M1.500 2v6h3" fill="none" stroke="#777" /><path d="M6 2h6L9.500 5H12l-6 7 1.500-5H5z" fill="#e08a4a" /></svg>
          幻灯片播放
        </PaneButton>
      </PaneRow>
      <Check><input type="checkbox" defaultChecked />自动预览</Check>
    </Pane>
  );
}

const More = () => (
  <svg width="11" height="3" viewBox="0 0 11 3"><path d="M0 1.500h2M4.500 1.500h2M9 1.500h2" stroke="currentColor" strokeWidth="1.500" /></svg>
);

const railIcons: [string, React.ReactNode][] = [
  ["动画", <Star size={11} key="i" />],
  ["切换", <Glyph d="M9 4V2H2v8h3M6 6h6l3 3v5H6zM8 10h4" key="i" />],
  ["形状", <Glyph d="M6 6V2h8v8h-3M6 6a4 4 0 1 0 .1 0" key="i" />],
  ["属性", <Glyph d="M1 4h9M13 4h2M1 8h14M1 12h3M7 12h8M11 2v4M5 10v4" key="i" />],
  ["模板", <Glyph d="M12 4V2H1v10h2M5 5h10v10H5zM5 8h10M7 12l3-2 3 2" key="i" />],
  ["收藏", <Star size={12} key="i" />],
  ["素材", <Archive size={11} key="i" />],
  ["分享", <Glyph d="M9 3H2v12h12V8M7 9l7-7M11 2h3v3" key="i" />],
  ["图片", <Image size={12} key="i" />],
  ["音频", <Volume2 size={12} key="i" />],
  ["互动", <Glyph d="M8 1l6 3v7l-6 4-6-4V4zM8 4v7M5 8l3 3 3-3" key="i" />],
  ["历史", <History size={12} key="i" />],
  ["帮助", <Glyph d="M8 1a7 7 0 1 0 .1 0M6 6a2 2 0 1 1 3 2q-1 .500-1 1.500M8 12v.200" key="i" />],
];

export default function App() {
  return (
    <Window>
      <Global />
      <Header />
      <RibbonBar />
      <Body>
        <Thumbnails />
        <Center>
          <StageRow>
            <Stage><Canvas /></Stage>
            <VScroll>
              <Glyph size={5} d="M3 11h10L8 5z" fill="#777" color="#777" />
              <VThumb />
              <Glyph size={5} d="M3 5h10l-5 6z" fill="#777" color="#777" />
              <Glyph size={6} d="M3 7h10L8 2zM3 14h10L8 9z" fill="#777" color="#777" />
              <Glyph size={6} d="M3 2h10L8 7zM3 9h10l-5 5z" fill="#777" color="#777" />
            </VScroll>
          </StageRow>
          <HScroll>
            <Glyph size={5} d="M11 3v10L5 8z" fill="#777" color="#777" />
            <HThumb />
            <Glyph size={5} d="M5 3v10l6-5z" fill="#777" color="#777" />
          </HScroll>
          <NotesRow><Glyph size={12} d="M2 2h12v10H6l-3 3v-3H2zM5 5h6M5 8h4" />单击此处添加备注</NotesRow>
        </Center>
        <AnimationPane />
        <Rail>
          <RailMore $h={16} aria-label="拖动"><More /></RailMore>
          {railIcons.map(([name, icon], i) => (
            <RailButton key={name} aria-label={name} $active={i === 0}>{icon}</RailButton>
          ))}
          <RailMore $h={46} aria-label="更多"><More /></RailMore>
        </Rail>
      </Body>
      <StatusBar>
        <StatusText $w={63}>幻灯片 5 / 25</StatusText>
        <StatusText>《成为前端开发工程师》走进高校</StatusText>
        <StatusTools>
          <ViewButton $w={17} aria-label="备注"><Glyph size={11} d="M1 3h13M1 7h13M1 11h7M11 10l2 3 2-3" /><Caret /></ViewButton>
          <ViewButton $active aria-label="普通视图"><Glyph d="M1 2h14v12H1zM5 2v12M8 5h4v6H8z" /></ViewButton>
          <ViewButton aria-label="浏览视图"><Glyph d="M1 2h5v4H1zM10 2h5v4h-5zM1 10h5v4H1zM10 10h5v4h-5z" /></ViewButton>
          <ViewButton aria-label="阅读视图"><Glyph d="M1 2h14v12H1zM8 2v13" /></ViewButton>
          <PlayButton aria-label="放映"><svg width="8" height="9" viewBox="0 0 8 9"><path d="M0 0l8 4.500L0 9z" fill="#fff" /></svg></PlayButton>
          <ViewButton $w={4} aria-label="放映选项"><Caret /></ViewButton>
          <ViewButton $w={40}>53%<Caret /></ViewButton>
          <ViewButton $w={11} aria-label="缩小"><Minus size={11} /></ViewButton>
          <Zoom type="range" min={0} max={100} defaultValue={21} aria-label="缩放" />
          <ViewButton $w={12} aria-label="放大"><Plus size={12} /></ViewButton>
          <ViewButton $w={16} aria-label="适应窗口"><Glyph size={11} d="M1 5V2h4M11 2h4v3M15 11v3h-4M5 14H1v-3M8 8h.200" /></ViewButton>
          <Assistant>AI 智能排版</Assistant>
        </StatusTools>
      </StatusBar>
      <Watermark><BookLogo />网易云课堂</Watermark>
    </Window>
  );
}
